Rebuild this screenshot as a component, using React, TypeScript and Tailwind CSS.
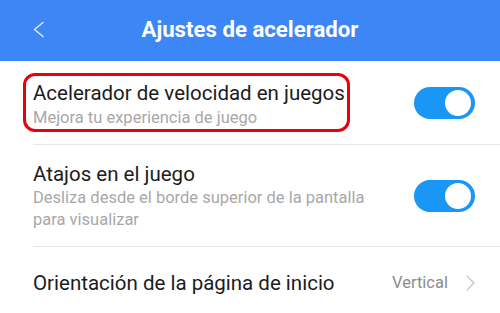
import React from "react";

function Toggle() {
  return (
    <div className="relative h-[32px] w-[61px] shrink-0 rounded-full bg-[#1996f6]">
      <div className="absolute right-[4px] top-[3px] h-[26px] w-[26px] rounded-full bg-white" />
    </div>
  );
}

export default function App() {
  return (
    <div
      className="h-[313px] w-[500px] overflow-hidden bg-white"
      style={{ fontFamily: "Roboto, 'Noto Sans', sans-serif" }}
    >
      <div className="relative flex h-[61px] items-center justify-center bg-[#3d86f5]">
        <svg
          className="absolute left-[32px] top-[21px]"
          width="13"
          height="17"
          viewBox="0 0 13 17"
          fill="none"
        >
          <path d="M11 1.5L2.5 8.5L11 15.5" stroke="#dce8fd" strokeWidth="1.6" strokeLinecap="round" strokeLinejoin="round" />
        </svg>
        <span className="pb-[2px] text-[22.2px] font-bold text-white">Ajustes de acelerador</span>
      </div>

      <div className="pl-[33px]">
        <div className="relative flex h-[84px] items-center border-b border-[#e8e8e8] pr-[25px]">
          <div className="flex flex-1 flex-col pt-[4px]">
            <span className="text-[20.5px] leading-[24px] text-[#1c1c1c]">Acelerador de velocidad en juegos</span>
            <span className="mt-[2px] text-[16.5px] leading-[21px] text-[#a8a8a8]">Mejora tu experiencia de juego</span>
          </div>
          <Toggle />
          <div className="absolute left-[-10px] top-[12px] h-[59px] w-[327px] rounded-[12px] border-[3px] border-[#e8000b]" />
        </div>

        <div className="flex h-[102px] items-center border-b border-[#e8e8e8] pr-[25px]">
          <div className="flex flex-1 flex-col pt-[2px]">
            <span className="text-[20.5px] leading-[24px] text-[#1c1c1c]">Atajos en el juego</span>
            <span className="mt-[1px] w-[345px] text-[16.5px] leading-[22px] text-[#a8a8a8]">
              Desliza desde el borde superior de la pantalla para visualizar
            </span>
          </div>
          <Toggle />
        </div>

        <div className="flex h-[72px] items-center pr-[25px]">
          <span className="flex-1 text-[20.5px] leading-[24px] text-[#1c1c1c]">Orientación de la página de inicio</span>
          <span className="mr-[18px] text-[16.5px] text-[#8c8c8c]">Vertical</span>
          <svg width="9" height="16" viewBox="0 0 9 16" fill="none">
            <path d="M1 1L8 8L1 15" stroke="#c4c4c4" strokeWidth="1.3" strokeLinecap="round" strokeLinejoin="round" />
          </svg>
        </div>
      </div>
    </div>
  );
}
